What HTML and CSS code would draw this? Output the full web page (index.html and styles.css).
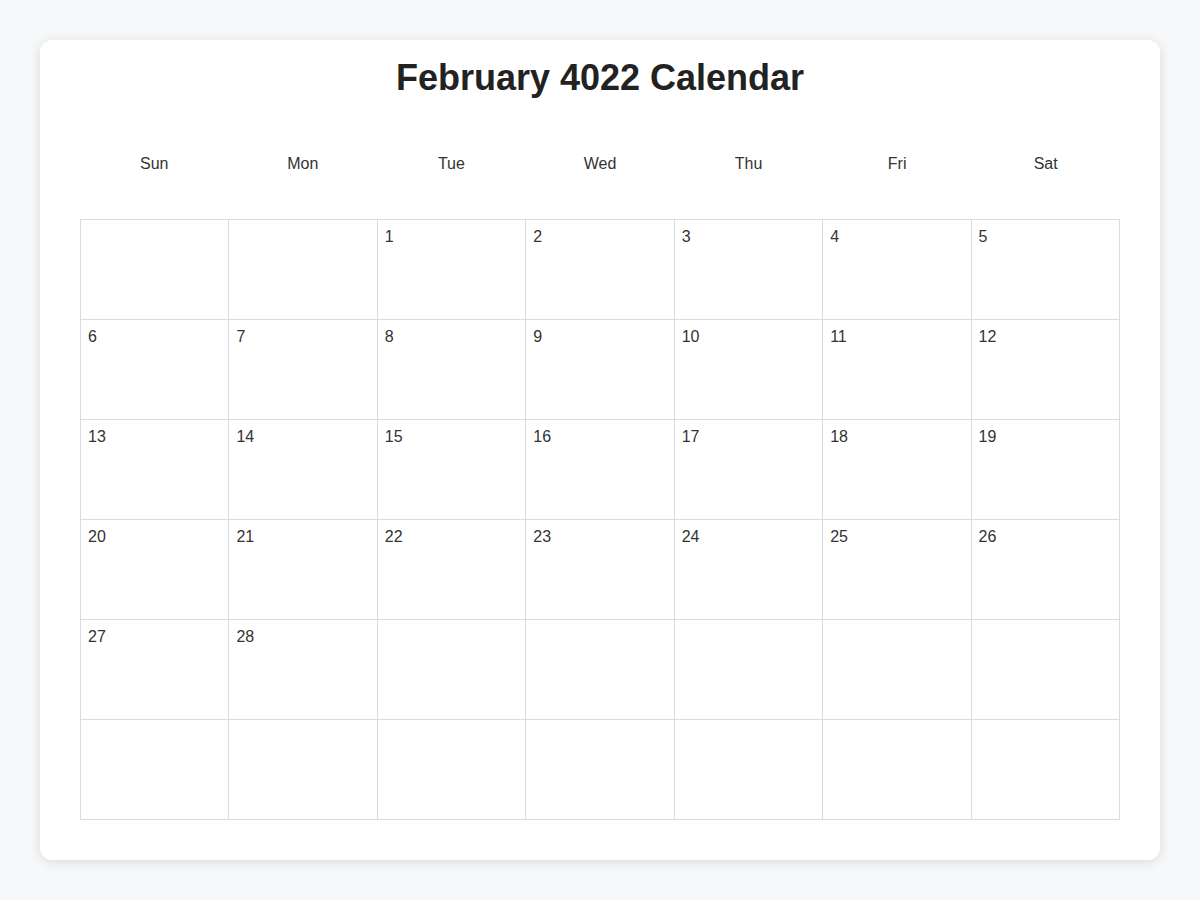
FILE: index.html
```html
<!DOCTYPE html>
<html lang="en">
<head>
<meta charset="utf-8">
<title>February 4022 Calendar</title>
<link rel="stylesheet" href="styles.css">
</head>
<body>
<main class="card">
  <h1 class="title">February 4022 Calendar</h1>
  <div class="weekdays">
    <div class="weekday">Sun</div>
    <div class="weekday">Mon</div>
    <div class="weekday">Tue</div>
    <div class="weekday">Wed</div>
    <div class="weekday">Thu</div>
    <div class="weekday">Fri</div>
    <div class="weekday">Sat</div>
  </div>
  <div class="grid">
    <div class="cell"></div><div class="cell"></div><div class="cell">1</div><div class="cell">2</div><div class="cell">3</div><div class="cell">4</div><div class="cell">5</div>
    <div class="cell">6</div><div class="cell">7</div><div class="cell">8</div><div class="cell">9</div><div class="cell">10</div><div class="cell">11</div><div class="cell">12</div>
    <div class="cell">13</div><div class="cell">14</div><div class="cell">15</div><div class="cell">16</div><div class="cell">17</div><div class="cell">18</div><div class="cell">19</div>
    <div class="cell">20</div><div class="cell">21</div><div class="cell">22</div><div class="cell">23</div><div class="cell">24</div><div class="cell">25</div><div class="cell">26</div>
    <div class="cell">27</div><div class="cell">28</div><div class="cell"></div><div class="cell"></div><div class="cell"></div><div class="cell"></div><div class="cell"></div>
    <div class="cell"></div><div class="cell"></div><div class="cell"></div><div class="cell"></div><div class="cell"></div><div class="cell"></div><div class="cell"></div>
  </div>
</main>
</body>
</html>
```
FILE: styles.css
```css
html, body {
  margin: 0;
  padding: 0;
}
body {
  background: #f7f8fa;
  font-family: "Liberation Sans", Arial, Helvetica, sans-serif;
  color: #333;
  padding: 40px;
}
.card {
  background: #fff;
  border-radius: 12px;
  box-shadow: 0 2px 12px rgba(0, 0, 0, 0.12);
  padding: 17px 40px 40px;
}
.title {
  margin: 0;
  text-align: center;
  font-size: 36px;
  font-weight: bold;
  color: #222;
  line-height: 41px;
}
.weekdays {
  display: grid;
  grid-template-columns: repeat(7, 1fr);
  margin-top: 46px;
  margin-bottom: 35px;
}
.weekday {
  text-align: center;
  font-size: 16px;
  height: 40px;
  line-height: 40px;
  color: #333;
}
.grid {
  display: grid;
  grid-template-columns: repeat(7, 1fr);
  border-top: 1px solid #dcdcdc;
  border-left: 1px solid #dcdcdc;
}
.cell {
  height: 91px;
  padding-top: 8px;
  border-right: 1px solid #dcdcdc;
  border-bottom: 1px solid #dcdcdc;
  font-size: 16px;
  line-height: 18px;
  color: #333;
  text-indent: 7px;
}
```
